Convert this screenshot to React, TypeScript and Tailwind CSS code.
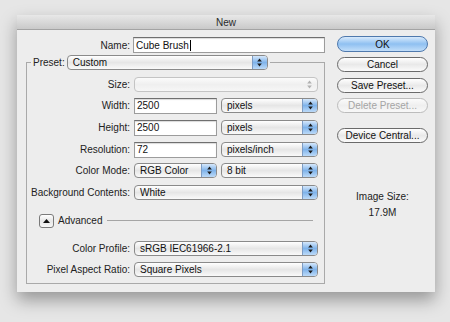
import React from 'react';

const Arrows: React.FC<{ disabled?: boolean }> = ({ disabled }) => (
  <svg width="5" height="9" viewBox="0 0 5 9" className="block">
    <path d="M2.5 0.5 L4.8 3.5 L0.2 3.5 Z" fill={disabled ? '#b0b0b0' : '#1a1a1a'} />
    <path d="M2.5 8.5 L4.8 5.5 L0.2 5.5 Z" fill={disabled ? '#b0b0b0' : '#1a1a1a'} />
  </svg>
);

const Select: React.FC<{ value?: string; width: string; disabled?: boolean }> = ({ value, width, disabled }) => {
  if (disabled) {
    return (
      <div className={`${width} h-[15px] flex items-stretch rounded-[4px] border border-[#c4c4c4] bg-linear-to-b from-[#fbfbfb] via-[#efefef] to-[#f6f6f6]`}>
        <div className="flex-1" />
        <div className="w-[15px] flex items-center justify-center">
          <Arrows disabled />
        </div>
      </div>
    );
  }
  return (
    <div className={`${width} h-[15px] flex items-stretch rounded-[4px] border border-[#8a8a8a] bg-linear-to-b from-white via-[#e6e6e6] to-[#fafafa] overflow-hidden`}>
      <div className="flex-1 pl-[5px] text-[10px] leading-[13px] text-[#111] whitespace-nowrap">{value}</div>
      <div className="w-[15px] flex items-center justify-center border-l border-[#7d9cc4] bg-linear-to-b from-[#d6e8fb] via-[#7fb3ea] to-[#bcdaf8]">
        <Arrows />
      </div>
    </div>
  );
};

const Input: React.FC<{ value: string; width: string; caret?: boolean }> = ({ value, width, caret }) => (
  <div className={`${width} h-[16px] flex items-center bg-white border border-[#9c9c9c] border-t-[#6f6f6f] pl-[2px] text-[10px] text-[#111] shadow-[inset_0_1px_1px_rgba(0,0,0,0.15)]`}>
    <span>{value}</span>
    {caret && <span className="w-px h-[11px] bg-black ml-px" />}
  </div>
);

const Label: React.FC<{ children: React.ReactNode; w?: string }> = ({ children, w = 'w-[103px]' }) => (
  <div className={`${w} shrink-0 text-right text-[10px] text-[#222] whitespace-nowrap`}>{children}</div>
);

const Row: React.FC<{ children: React.ReactNode; className?: string }> = ({ children, className }) => (
  <div className={`h-[15px] flex items-center gap-[4px] ${className ?? ''}`}>{children}</div>
);

const Button: React.FC<{ children: React.ReactNode; primary?: boolean; disabled?: boolean; className?: string }> = ({ children, primary, disabled, className }) => {
  let tone = 'border-[#6a6a6a] text-[#111] bg-linear-to-b from-white via-[#e9e9e9] to-[#fbfbfb]';
  if (primary) tone = 'border-[#4f79ad] text-[#111] bg-linear-to-b from-[#d8eafc] via-[#8fc0f1] to-[#c2def9]';
  if (disabled) tone = 'border-[#bcbcbc] text-[#a5a5a5] bg-linear-to-b from-[#fbfbfb] via-[#efefef] to-[#f8f8f8]';
  return (
    <div className={`w-[91px] h-[15px] rounded-full border flex items-center justify-center text-[10px] ${tone} ${className ?? ''}`}>
      {children}
    </div>
  );
};

const App: React.FC = () => {
  return (
    <div className="w-[450px] h-[322px] bg-[#e6e6e6] pt-[15px] pl-[17px] overflow-hidden font-['Liberation_Sans',Arial,sans-serif]">
      <div className="w-[418px] h-[277px] flex flex-col bg-[#ededed] shadow-[0_8px_16px_rgba(0,0,0,0.35)]">
        {/* Title bar */}
        <div className="h-[15px] shrink-0 flex items-center justify-center text-[10px] text-[#2a2a2a] bg-linear-to-b from-[#e8e8e8] to-[#c9c9c9] border-b border-[#a3a3a3]">
          New
        </div>

        <div className="flex pl-[9px] pr-[7px] gap-[12px]">
          {/* Left column */}
          <div className="w-[299px] flex flex-col">
            <div className="mt-[7px] h-[16px] flex items-center gap-[3px]">
              <Label w="w-[104px]">Name:</Label>
              <Input value="Cube Brush" width="w-[192px]" caret />
            </div>

            <fieldset className="mt-[2px] w-[299px] border border-[#a9a9a9] pb-[6px]">
              <legend className="ml-[4px] px-[2px] flex items-center gap-[2px]">
                <span className="text-[10px] text-[#222]">Preset:</span>
                <Select value="Custom" width="w-[201px]" />
              </legend>

              <Row className="mt-[7px]">
                <Label>Size:</Label>
                <Select width="w-[184px]" disabled />
              </Row>
              <Row className="mt-[6px]">
                <Label>Width:</Label>
                <Input value="2500" width="w-[83px]" />
                <Select value="pixels" width="w-[97px]" />
              </Row>
              <Row className="mt-[7px]">
                <Label>Height:</Label>
                <Input value="2500" width="w-[83px]" />
                <Select value="pixels" width="w-[97px]" />
              </Row>
              <Row className="mt-[7px]">
                <Label>Resolution:</Label>
                <Input value="72" width="w-[83px]" />
                <Select value="pixels/inch" width="w-[97px]" />
              </Row>
              <Row className="mt-[6px]">
                <Label>Color Mode:</Label>
                <Select value="RGB Color" width="w-[83px]" />
                <Select value="8 bit" width="w-[97px]" />
              </Row>
              <Row className="mt-[7px]">
                <Label>Background Contents:</Label>
                <Select value="White" width="w-[184px]" />
              </Row>

              <div className="mt-[13px] h-[15px] flex items-center pl-[12px]">
                <div className="w-[15px] h-[14px] rounded-[3px] border border-[#7a7a7a] bg-linear-to-b from-white via-[#e6e6e6] to-[#f7f7f7] flex items-center justify-center">
                  <svg width="7" height="4" viewBox="0 0 7 4">
                    <path d="M3.5 0 L7 4 L0 4 Z" fill="#111" />
                  </svg>
                </div>
                <span className="ml-[4px] text-[10px] text-[#222]">Advanced</span>
                <div className="ml-[5px] w-[206px] h-px bg-[#a5a5a5]" />
              </div>

              <Row className="mt-[13px]">
                <Label>Color Profile:</Label>
                <Select value="sRGB IEC61966-2.1" width="w-[184px]" />
              </Row>
              <Row className="mt-[6px]">
                <Label>Pixel Aspect Ratio:</Label>
                <Select value="Square Pixels" width="w-[184px]" />
              </Row>
            </fieldset>
          </div>

          {/* Right column */}
          <div className="w-[91px] flex flex-col">
            <Button primary className="mt-[6px] h-[16px]">OK</Button>
            <Button className="mt-[5px]">Cancel</Button>
            <Button className="mt-[6px]">Save Preset...</Button>
            <Button disabled className="mt-[5px]">Delete Preset...</Button>
            <Button className="mt-[15px]">Device Central...</Button>
            <div className="mt-[48px] text-center text-[10px] leading-[12px] text-[#222]">Image Size:</div>
            <div className="mt-[4px] text-center text-[10px] leading-[12px] text-[#222]">17.9M</div>
          </div>
        </div>
      </div>
    </div>
  );
};

export default App;
